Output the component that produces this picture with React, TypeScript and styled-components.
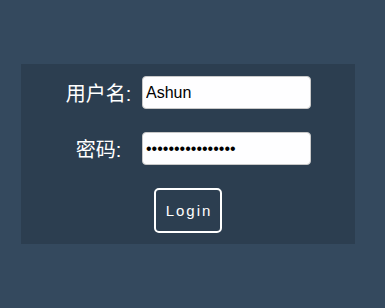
import styled, { createGlobalStyle } from 'styled-components';

const GlobalStyle = createGlobalStyle`
    html, body {
        margin: 0;
        padding: 0;
        background-color: #34495e;
        font-family: "Liberation Sans", "Noto Sans CJK SC", sans-serif;
    }
`

const Page = styled.div`
    width: 385px;
    height: 308px;
    padding-top: 64px;
    padding-left: 21px;
    box-sizing: border-box;
`

const Panel = styled.form`
    width: 334px;
    height: 180px;
    box-sizing: border-box;
    background-color: #2c3e50;
    padding: 12px 0 12px 34px;
    display: flex;
    flex-flow: column nowrap;
    gap: 23px;
`

const Row = styled.div`
    display: grid;
    grid-template-columns: 87px 169px;
    align-items: center;
`

const Label = styled.label`
    color: #ffffff;
    font-size: 20px;
    text-align: center;
`

const Field = styled.input`
    box-sizing: border-box;
    width: 169px;
    height: 33px;
    padding: 0 3px;
    border: 1px solid #c8c8c8;
    border-radius: 4px;
    background-color: #fefeff;
    color: #000;
    font-family: "Liberation Sans", sans-serif;
    font-size: 16px;
    outline: none;
`

const Actions = styled.div`
    display: flex;
    justify-content: center;
    padding-right: 34px;
`

const LoginButton = styled.button`
    box-sizing: border-box;
    width: 68px;
    height: 45px;
    border: 2px solid #ffffff;
    border-radius: 5px;
    background: transparent;
    color: #ffffff;
    font-family: "Liberation Sans", sans-serif;
    font-size: 15px;
    letter-spacing: 2px;
    padding: 0 0 0 2px;
    cursor: pointer;
`

export default function App() {
    return (
        <>
            <GlobalStyle />
            <Page>
                <Panel onSubmit={(e) => e.preventDefault()}>
                    <Row>
                        <Label htmlFor="user">用户名:</Label>
                        <Field id="user" type="text" defaultValue="Ashun" />
                    </Row>
                    <Row>
                        <Label htmlFor="pwd">密码:</Label>
                        <Field id="pwd" type="password" defaultValue="abcdefghijklmnop" />
                    </Row>
                    <Actions>
                        <LoginButton type="submit">Login</LoginButton>
                    </Actions>
                </Panel>
            </Page>
        </>
    )
}
